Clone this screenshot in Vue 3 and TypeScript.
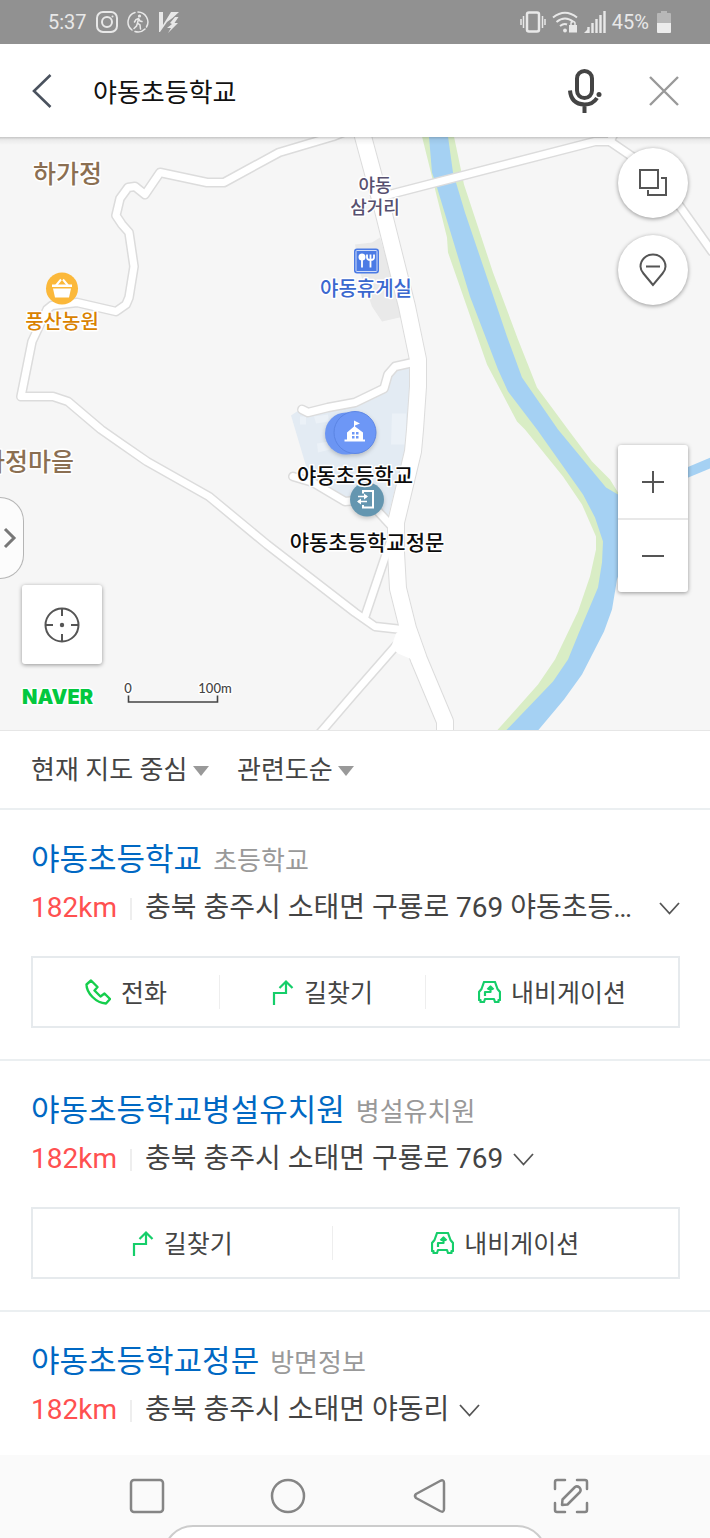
<script setup lang="ts">
import { ref } from 'vue'

type ActionKind = 'phone' | 'route' | 'navi'

interface Action {
  kind: ActionKind
  label: string
}

interface Place {
  name: string
  category: string
  distance: string
  address: string
  actions: Action[]
}

const phone: Action = { kind: 'phone', label: '전화' }
const route: Action = { kind: 'route', label: '길찾기' }
const navi: Action = { kind: 'navi', label: '내비게이션' }

const query = ref('야동초등학교')
const center = ref('현재 지도 중심')
const order = ref('관련도순')

const places: Place[] = [
  {
    name: '야동초등학교',
    category: '초등학교',
    distance: '182km',
    address: '충북 충주시 소태면 구룡로 769 야동초등학교',
    actions: [phone, route, navi],
  },
  {
    name: '야동초등학교병설유치원',
    category: '병설유치원',
    distance: '182km',
    address: '충북 충주시 소태면 구룡로 769',
    actions: [route, navi],
  },
  {
    name: '야동초등학교정문',
    category: '방면정보',
    distance: '182km',
    address: '충북 충주시 소태면 야동리',
    actions: [],
  },
]

const lanes = [
  'M353 129 333 137 279 153 224 183 207 183 160 173 145 195 135 187 128 188 120 199 116 216 122 225 129 233 134 267 129 298 126 305 116 312 77 303 52 306 47 310 32 342 21 397 53 397 68 402 101 430 121 444 147 462 209 497 267 545 355 613 375 627 402 630',
  'M378 198 595 142 610 142 632 157 680 207 712 252',
  'M610 142 616 130',
  'M302 410 308 413 328 408 355 403 384 389 388 375 395 367 413 363',
  'M293 477 313 483 345 502 367 500 392 527',
  'M391 540 365 617',
  'M397 645 355 693 318 736',
]
const mainRoad =
  'M359 120 363 137 382 207 407 307 418 360 418 387 415 430 413 452 396 523 396 553 398 589 408 629 419 660 445 722 445 740'
</script>

<template>
  <div class="app">
    <div class="status">
      <div class="status-group">
        <span>5:37</span>
        <svg width="22" height="22" viewBox="0 0 22 22" fill="none" stroke="currentColor" stroke-width="2">
          <rect x="1" y="1" width="20" height="20" rx="6" />
          <circle cx="11" cy="11" r="5" />
          <circle cx="16.500" cy="5.500" r="1" fill="currentColor" stroke="none" />
        </svg>
        <svg width="22" height="22" viewBox="0 0 22 22" fill="none" stroke="currentColor" stroke-width="1.500" stroke-linecap="round">
          <path d="M8 1.500A10 10 0 0 0 5 19M8 20.500A10 10 0 0 0 18 18M19.500 16A10 10 0 0 0 11 1" />
          <circle cx="12.500" cy="5" r="1.600" fill="currentColor" stroke="none" />
          <path d="M11.500 8 10.500 12 13 14 13.500 18M10.500 12 9.500 15 7 17.500M7.500 11 9 8.500 11.500 7.500 13 10 15 10.500" />
        </svg>
        <svg width="22" height="22" viewBox="0 0 22 22" fill="currentColor">
          <path d="M1 1H5V14L13 1H21L14.500 7 9 11 2 21H1Z" />
          <path d="M12 12 17 6H20.500L16.500 12H20L10 22 13 17H9L14 13Z" />
        </svg>
      </div>
      <div class="status-group right">
        <svg width="26" height="22" viewBox="0 0 26 22" fill="none" stroke="currentColor">
          <rect x="7" y="1.500" width="12" height="19" rx="2" stroke-width="2.500" />
          <path d="M3.500 5V17M22.500 5V17M1 8V14M25 8V14" stroke-width="1.500" />
        </svg>
        <svg width="26" height="22" viewBox="0 0 26 22" fill="none" stroke="currentColor" stroke-width="2">
          <path d="M1 6.500Q13-3 25 6.500M4.500 11Q13 4 21.500 11M8 15Q12 12 15 13.500" />
          <circle cx="13" cy="19.500" r="1.900" fill="currentColor" stroke="none" />
          <path d="M17 14H25V21.500H17Z" fill="currentColor" stroke="none" />
          <path d="M19 15V12.500A2 2 0 0 1 23 12.500V15" stroke-width="1.500" />
        </svg>
        <svg width="22" height="22" viewBox="0 0 22 22" fill="none" stroke="currentColor" stroke-width="2.400">
          <path d="M20.500 0V22M16.500 4V22M12.500 8V22M8.500 12V22M4.500 16V22" />
          <path d="M0 22 4 18V22Z" fill="currentColor" stroke="none" />
        </svg>
        <span>45%</span>
        <svg class="battery" width="14" height="22" viewBox="0 0 14 22">
          <path d="M4 0H10V2H13Q14 2 14 3V12H0V3Q0 2 1 2H4Z" fill="#b7b7b7" />
          <path d="M0 12H14V21Q14 22 13 22H1Q0 22 0 21Z" fill="#ececec" />
        </svg>
      </div>
    </div>

    <header class="search">
      <button class="plain" type="button" aria-label="뒤로">
        <svg width="20" height="34" viewBox="0 0 20 34" fill="none" stroke="#4a525e" stroke-width="2.600">
          <path d="M18.500 1 2 17 18.500 33" />
        </svg>
      </button>
      <input v-model="query" class="query" type="text" aria-label="검색어" />
      <button class="plain mic" type="button" aria-label="음성 검색">
        <svg width="34" height="44" viewBox="0 0 34 44" fill="none" stroke="#444" stroke-width="4">
          <rect x="9" y="2" width="15" height="27" rx="7.500" />
          <path d="M2 21.500Q3 35 16.500 35.500 25 35.500 29 29M16.500 35V44" />
          <circle cx="31" cy="25.500" r="2.500" fill="#444" stroke="none" />
        </svg>
      </button>
      <button class="plain" type="button" aria-label="지우기">
        <svg width="30" height="30" viewBox="0 0 30 30" fill="none" stroke="#999" stroke-width="2.400">
          <path d="M1 1 29 29M29 1 1 29" />
        </svg>
      </button>
    </header>

    <section class="map" aria-label="지도">
      <svg class="canvas" viewBox="0 137 710 594" preserveAspectRatio="xMidYMid slice">
        <path fill="#e9e9e9" d="M355 245 372 243 380 238 404 317 382 322 372 307 360 273Z" />
        <path fill="#d9edc5" d="M422 137 447 238 448 253 487 365 517 422 525 430 563 477 582 505 596 537 596 550 590 577 578 612 555 660 538 685 497 731H530L582 670 606 620 622 500 618 493 610 480 592 462 568 430 537 388 518 340 493 273 464 185 454 137Z" />
        <path fill="#a5d1f3" d="M429 137 432 173 437 188 470 297 498 370 508 392 537 430 583 495 595 518 603 542 602 563 598 588 579 633 568 660 553 682 506 731H538L564 700 582 675 604 632 612 610 617 580 624 560V498L618 495 606 488 558 430 522 378 507 337 465 213 453 173 448 137Z" />
        <path fill="none" stroke="#a5d1f3" stroke-width="10" d="M678 477 714 462" />
        <path fill="#e3ebf3" d="M291 416 300 410 353 405 383 392 390 372 410 368 410 390 405 450 388 517 343 503 313 487 305 463Z" />
        <path fill="#ebf1f7" d="M300 417H306V425H300ZM314 417 328 415 329 422 316 424ZM392 414H406V445H391ZM317 444 329 442 330 450 318 453Z" />

        <g fill="none" stroke-linejoin="round" stroke-linecap="round">
          <g stroke="#dcdcdc" stroke-width="10">
            <path v-for="lane in lanes" :key="lane" :d="lane" />
          </g>
          <path :d="mainRoad" stroke="#dcdcdc" stroke-width="18" />
          <g stroke="#fff" stroke-width="7">
            <path v-for="lane in lanes" :key="lane" :d="lane" />
          </g>
          <path :d="mainRoad" stroke="#fff" stroke-width="16" />
          <path d="M396 634 391 648 398 654 412 660 420 650 406 625Z" fill="#fff" />
        </g>

        <circle cx="62" cy="289" r="16" fill="#fbb83a" />
        <g fill="#fff">
          <path d="M52 285H72V287.500H52ZM53 289H71L69 298H55Z" />
          <path d="M56 286 61 280M68 286 63 280" stroke="#fff" stroke-width="2" />
        </g>

        <g>
          <rect x="354" y="249" width="25" height="25" rx="3" fill="#4b7be5" />
          <rect x="356" y="251" width="21" height="21" rx="1" fill="none" stroke="#cfdcf8" />
          <circle cx="362" cy="257.500" r="3.500" fill="#fff" />
          <path d="M362 258V268M370.500 260V268M367 255V258Q367 260.500 370.500 260.500 374 260.500 374 258V255M370.500 255V260" fill="none" stroke="#fff" stroke-width="1.800" />
        </g>

        <g class="pin">
          <circle cx="346" cy="434" r="21" fill="#6b95f3" />
          <circle cx="355" cy="433" r="21" fill="#6d97f6" stroke="#5b85e4" />
          <path fill="#fff" d="M354 421 360 424 355 426V427L363 433V440H365V442H344.500V440H347V433L354 427Z" />
          <path fill="#6d97f6" d="M352 432.500H354.500V435H352ZM356 432.500H358.500V435H356ZM352 436.500H354.500V439H352ZM356 436.500H358.500V439H356Z" />
        </g>
        <g class="pin">
          <circle cx="367" cy="500" r="17" fill="#6496b0" />
          <path fill="none" stroke="#fff" stroke-width="2" d="M363 494V491.500H373V508H363V505.500" />
          <path fill="none" stroke="#fff" stroke-width="1.600" d="M358 497H367M358 502H367" />
          <path fill="#fff" d="M364 494 368 497 364 500ZM361 499 357 502 361 505Z" />
        </g>

        <g class="labels">
          <text x="33" y="183" class="area">하가정</text>
          <text x="74" y="471" class="area end">가정마을</text>
          <text x="375" y="192" class="cross">야동</text>
          <text x="375" y="214" class="cross">삼거리</text>
          <text x="366" y="296" class="rest">야동휴게실</text>
          <text x="62" y="329" class="farm">풍산농원</text>
          <text x="355" y="483" class="school">야동초등학교</text>
          <text x="367" y="550" class="school">야동초등학교정문</text>
          <text x="22" y="704" class="brand">NAVER</text>
          <text x="128" y="693" class="scale">0</text>
          <text x="215" y="693" class="scale">100m</text>
        </g>
        <path fill="none" stroke="#444" stroke-width="1.600" d="M128.500 696V702.500H217.500V696" />
      </svg>

      <div class="tools">
        <button class="round" type="button" aria-label="지도 종류">
          <svg width="28" height="28" viewBox="0 0 28 28" fill="none" stroke="#555" stroke-width="2">
            <path d="M1 1H19V19H1ZM22 9H27V26H9V21" />
          </svg>
        </button>
        <button class="round" type="button" aria-label="장소 표시">
          <svg width="28" height="34" viewBox="0 0 28 34" fill="none" stroke="#555" stroke-width="2">
            <path d="M14 32 4.500 20.500Q1.500 17 1.500 13.500A12.500 12 0 0 1 26.500 13.500Q26.500 17 23.500 20.500ZM7 13.500H21" />
          </svg>
        </button>
      </div>

      <div class="zoom">
        <button type="button" aria-label="확대">
          <svg width="22" height="22" viewBox="0 0 22 22" stroke="#555" stroke-width="2"><path d="M0 11H22M11 0V22" /></svg>
        </button>
        <button type="button" aria-label="축소">
          <svg width="22" height="22" viewBox="0 0 22 22" stroke="#555" stroke-width="2"><path d="M0 11H22" /></svg>
        </button>
      </div>

      <button class="drawer" type="button" aria-label="펼치기">
        <svg width="14" height="22" viewBox="0 0 14 22" fill="none" stroke="#777" stroke-width="3"><path d="M2 2 11 11 2 20" /></svg>
      </button>

      <button class="locate" type="button" aria-label="현재 위치">
        <svg width="36" height="36" viewBox="0 0 36 36" fill="none" stroke="#555" stroke-width="2">
          <circle cx="18" cy="18" r="16.500" />
          <path d="M18 2V9M18 27V34M2 18H9M27 18H34" />
          <circle cx="18" cy="18" r="2.200" fill="#555" stroke="none" />
        </svg>
      </button>
    </section>

    <div class="filters">
      <label class="filter">
        <select v-model="center" aria-label="기준 위치"><option>현재 지도 중심</option></select>
        <svg width="16" height="10" viewBox="0 0 16 10"><path d="M0 0H16L8 10Z" fill="#999" /></svg>
      </label>
      <label class="filter">
        <select v-model="order" aria-label="정렬"><option>관련도순</option></select>
        <svg width="16" height="10" viewBox="0 0 16 10"><path d="M0 0H16L8 10Z" fill="#999" /></svg>
      </label>
    </div>

    <main class="results">
      <article v-for="place in places" :key="place.name" class="place">
        <h2 class="heading">
          <a class="name" href="#">{{ place.name }}</a>
          <span class="category">{{ place.category }}</span>
        </h2>
        <div class="where">
          <span class="distance">{{ place.distance }}</span>
          <span class="address">{{ place.address }}</span>
          <button class="plain" type="button" aria-label="주소 더보기">
            <svg width="21" height="13" viewBox="0 0 21 13" fill="none" stroke="#555" stroke-width="1.800"><path d="M1 1 10.500 11.500 20 1" /></svg>
          </button>
        </div>
        <div v-if="place.actions.length" class="actions">
          <button v-for="action in place.actions" :key="action.kind" class="action" type="button">
            <svg v-if="action.kind === 'phone'" width="26" height="26" viewBox="0 0 26 26" fill="none" stroke="#15ce4c" stroke-width="2.400" stroke-linejoin="round">
              <path d="M6 1.500 1.500 5.500Q1.500 12 7.500 18 13.500 24 21 24.500L25 20 19.500 14.500 15.500 17.500 9.500 11.500 12.500 8Z" />
            </svg>
            <svg v-else-if="action.kind === 'route'" width="22" height="26" viewBox="0 0 22 26" fill="none" stroke="#15ce6a" stroke-width="2.200">
              <path d="M2 26V14H14V2.500M7.500 9 14 2.500 20.500 9" />
            </svg>
            <svg v-else width="23" height="22" viewBox="0 0 23 22" fill="none" stroke="#15ce6a" stroke-width="2.200" stroke-linejoin="round">
              <path d="M6 1H17L19.500 8 22 11V19H20.500V21H17L16 18H7L6 21H2.500V19H1V11L3.500 8Z" />
              <path d="M7 15V11H12.500V6M9.500 8.500 12.500 5.500 15.500 8.500" />
            </svg>
            <span class="action-label">{{ action.label }}</span>
          </button>
        </div>
      </article>
    </main>

    <nav class="system">
      <button class="plain" type="button" aria-label="최근 앱">
        <svg width="36" height="36" viewBox="0 0 36 36" class="key"><rect x="2" y="2" width="32" height="32" rx="3" /></svg>
      </button>
      <button class="plain" type="button" aria-label="홈">
        <svg width="36" height="36" viewBox="0 0 36 36" class="key"><circle cx="18" cy="18" r="16" /></svg>
      </button>
      <button class="plain" type="button" aria-label="이전">
        <svg width="36" height="36" viewBox="0 0 36 36" class="key"><path d="M28 3Q32 1 32 5V31Q32 35 28 33L4 20Q2 18 4 16Z" /></svg>
      </button>
      <button class="plain" type="button" aria-label="캡처">
        <svg width="36" height="36" viewBox="0 0 36 36" class="key">
          <path d="M2 11V4Q2 2 4 2H12M24 2H32Q34 2 34 4V11M34 25V32Q34 34 32 34H24M12 34H4Q2 34 2 32V25" />
          <path d="M9 27 9.500 21.500 22 9Q24 7.500 26.500 9.500 28.500 12 27 14L14.500 26.500Z" />
        </svg>
      </button>
      <div class="sheet"></div>
    </nav>
  </div>
</template>

<style>
body {
  background: #fff;
}
</style>

<style scoped>
.app {
  display: flex;
  flex-direction: column;
  min-height: 100vh;
  font-family: Roboto, "Noto Sans CJK KR", sans-serif;
  color: #444;
}

.app *,
.app {
  box-sizing: border-box;
}

svg {
  display: block;
  flex: none;
}

button,
input,
select {
  margin: 0;
  padding: 0;
  border: 0;
  background: none;
  color: inherit;
  font: inherit;
  appearance: none;
}

.plain {
  display: flex;
  align-items: center;
  justify-content: center;
}

.status {
  display: flex;
  justify-content: space-between;
  height: 44px;
  padding: 0 39px 0 48px;
  background: #919191;
  color: #e8e8e8;
  font-size: 20px;
}

.status-group {
  display: flex;
  align-items: center;
  gap: 9px;
}

.status-group.right {
  gap: 6px;
}

.battery {
  margin-left: 2px;
}

.search {
  display: flex;
  align-items: center;
  height: 93px;
  padding: 0 31px 0 32px;
  background: #fff;
}

.query {
  flex: 1;
  min-width: 0;
  height: 60px;
  margin-left: 41px;
  color: #111;
  font-size: 26px;
  outline: none;
}

.mic {
  margin-right: 47px;
}

.map {
  position: relative;
  aspect-ratio: 710 / 594;
  overflow: hidden;
  border-bottom: 1px solid #e6e6e6;
  background: #f6f6f6;
}

.map::before {
  content: "";
  position: absolute;
  inset: 0 0 auto;
  height: 8px;
  background: linear-gradient(rgba(0, 0, 0, 0.2), rgba(0, 0, 0, 0.05) 35%, transparent);
}

.canvas {
  width: 100%;
  height: 100%;
}

.pin {
  filter: drop-shadow(0 2px 2px rgba(0, 0, 0, 0.2));
}

.labels text {
  font-weight: 500;
  text-anchor: middle;
  paint-order: stroke;
  stroke: #fff;
  stroke-width: 3px;
  stroke-linejoin: round;
}

.labels .area {
  fill: #8b6f52;
  font-size: 25px;
  text-anchor: start;
}

.labels .end {
  text-anchor: end;
}

.labels .cross {
  fill: #57506f;
  font-size: 18px;
}

.labels .rest {
  fill: #3b68cf;
  font-size: 20px;
}

.labels .farm {
  fill: #d98200;
  font-size: 20px;
}

.labels .school {
  fill: #0c0c0c;
  font-size: 21px;
}

.labels .brand {
  fill: #03c83f;
  font-family: Inter, sans-serif;
  font-size: 20px;
  font-weight: 900;
  text-anchor: start;
}

.labels .scale {
  fill: #444;
  font-family: Lato, sans-serif;
  font-size: 13px;
}

.tools {
  position: absolute;
  top: 11px;
  right: 22px;
  display: flex;
  flex-direction: column;
  gap: 17px;
}

.round,
.zoom,
.locate {
  background: #fff;
  box-shadow: 0 1px 4px rgba(0, 0, 0, 0.4);
}

.round,
.locate,
.drawer,
.zoom button {
  display: flex;
  align-items: center;
  justify-content: center;
}

.round {
  width: 70px;
  height: 70px;
  border-radius: 50%;
}

.zoom {
  position: absolute;
  right: 22px;
  bottom: 138px;
  width: 70px;
  border-radius: 3px;
}

.zoom button {
  width: 100%;
  height: 73px;
}

.zoom button + button {
  height: 74px;
  border-top: 2px solid #e8e8e8;
}

.drawer {
  position: absolute;
  left: 0;
  bottom: 151px;
  width: 24px;
  height: 82px;
  padding-right: 4px;
  border: 1px solid #b5b5b5;
  border-left: 0;
  border-radius: 0 24px 24px 0;
  background: #fcfcfc;
}

.locate {
  position: absolute;
  left: 22px;
  bottom: 66px;
  width: 80px;
  height: 79px;
  border-radius: 3px;
}

.filters {
  display: flex;
  align-items: center;
  gap: 28px;
  height: 79px;
  padding: 0 31px;
  border-bottom: 2px solid #ebeff1;
}

.filter {
  display: flex;
  align-items: center;
  gap: 5px;
  font-size: 26px;
}

.filter svg {
  margin-top: 3px;
}

.filter select {
  height: 40px;
}

.results {
  flex: 1;
}

.place {
  padding: 30px 30px 31px 31px;
  border-bottom: 2px solid #ebeff1;
}

.place:last-child {
  padding-bottom: 24px;
  border-bottom: 0;
}

.heading {
  display: flex;
  align-items: baseline;
  gap: 11px;
  height: 40px;
  margin: 0;
  font-weight: 400;
  line-height: 40px;
  white-space: nowrap;
}

.name {
  color: #0068c3;
  font-size: 31px;
  text-decoration: none;
}

.category {
  color: #999;
  font-size: 26px;
}

.where {
  display: flex;
  align-items: center;
  height: 40px;
  margin-top: 8px;
  font-size: 28px;
  line-height: 40px;
  white-space: nowrap;
}

.distance {
  color: #ff5050;
}

.distance::after {
  content: "";
  display: inline-block;
  width: 2px;
  height: 22px;
  margin: 0 13px;
  background: #eee;
  vertical-align: -3px;
}

.address {
  min-width: 0;
  margin-right: 10px;
  overflow: hidden;
  text-overflow: ellipsis;
}

.actions {
  display: flex;
  align-items: center;
  height: 72px;
  margin-top: 28px;
  border: 2px solid #e6eaed;
}

.action {
  display: flex;
  flex: 1 1 auto;
  align-items: center;
  justify-content: center;
  gap: 10px;
  height: 34px;
  font-size: 25px;
}

.action-label {
  padding-bottom: 3px;
}

.action + .action {
  border-left: 1px solid #eee;
}

.system {
  position: relative;
  display: flex;
  height: 83px;
  padding: 0 68px 0 76px;
  overflow: hidden;
  background: #fafafa;
}

.system .plain {
  flex: 1;
  height: 82px;
}

.key {
  fill: none;
  stroke: #858585;
  stroke-width: 2.500px;
  stroke-linecap: round;
  stroke-linejoin: round;
}

.sheet {
  position: absolute;
  top: 70px;
  left: 23%;
  right: 23%;
  height: 60px;
  border: 2px solid #ccc;
  border-radius: 30px;
  background: #fff;
}
</style>
